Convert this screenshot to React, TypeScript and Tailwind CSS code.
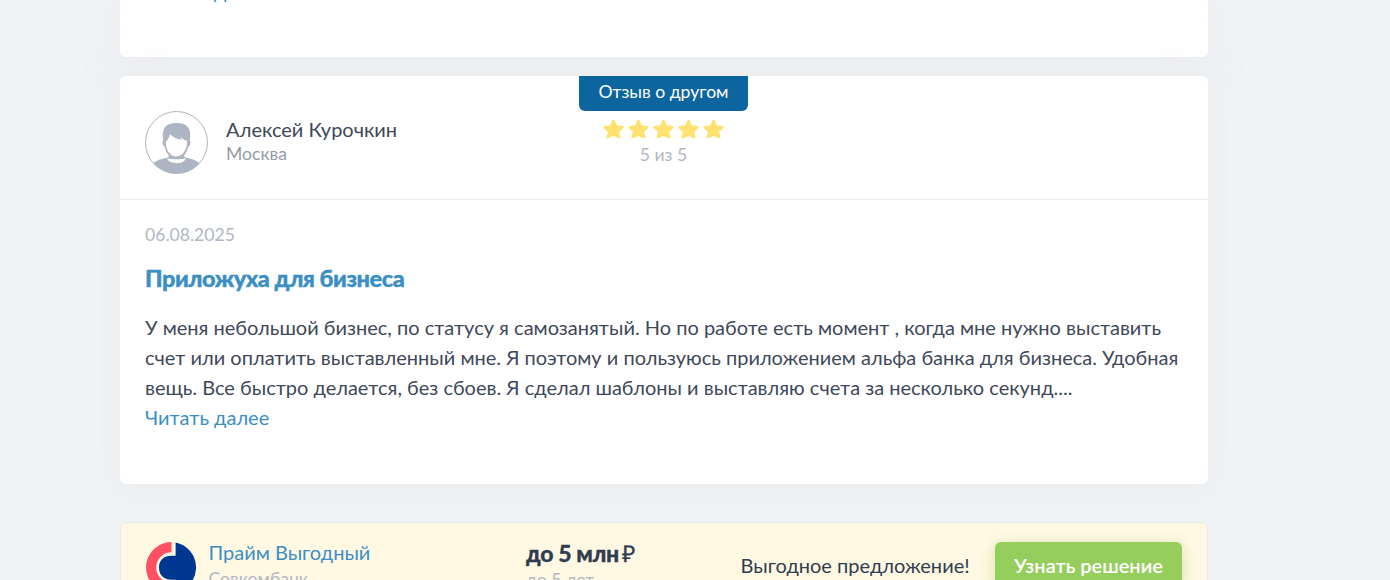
import React from 'react';

interface Review {
  author: string;
  city: string;
  badge: string;
  rating: number;
  date: string;
  title: string;
  text: string;
}

const review: Review = {
  author: 'Алексей Курочкин',
  city: 'Москва',
  badge: 'Отзыв о другом',
  rating: 5,
  date: '06.08.2025',
  title: 'Приложуха для бизнеса',
  text: 'У меня небольшой бизнес, по статусу я самозанятый. Но по работе есть момент , когда мне нужно выставить счет или оплатить выставленный мне. Я поэтому и пользуюсь приложением альфа банка для бизнеса. Удобная вещь. Все быстро делается, без сбоев. Я сделал шаблоны и выставляю счета за несколько секунд....',
};

const Avatar = () => (
  <svg viewBox="0 0 63 63" className="h-[63px] w-[63px] shrink-0">
    <defs>
      <clipPath id="avatar-circle">
        <circle cx="31.5" cy="31.5" r="31" />
      </clipPath>
    </defs>
    <g clipPath="url(#avatar-circle)">
      {/* shoulders, then the head outline with the neck */}
      <path
        d="M7 54C11 48.5 17 48 21 47C23.5 46.3 24.3 45.5 24.3 43H38.7C38.7 45.5 39.5 46.3 42 47C46 48 52 48.5 56 54V63H7Z"
        fill="#adb5c2"
      />
      <path
        d="M18.3 29.5C16.2 18 20 12 31.5 12C43 12 46.8 18 44.7 29.5C46.3 30.5 45 35.5 43.2 36C42 41 39.5 44.5 37.5 46.5L31.5 49L25.5 46.5C23.5 44.5 21 41 19.8 36C18 35.5 16.7 30.5 18.3 29.5Z"
        fill="#adb5c2"
      />
      <path
        d="M20.8 31C22.5 29.5 24.2 26.2 25 23.3C28 26.5 32 28 36.8 28.8L35.2 25.5C37 28 39.5 29 42.2 29.8C42.3 37 38.5 45.5 31.5 45.5C24.5 45.5 20.8 38 20.8 31Z"
        fill="#fff"
      />
      <path d="M22.3 47.2C27 48.6 36 48.6 40.7 47.2C39.5 53.8 23.5 53.8 22.3 47.2Z" fill="#fff" />
    </g>
    <circle cx="31.5" cy="31.5" r="31" fill="none" stroke="#adb5c2" />
  </svg>
);

const Star = () => (
  <svg viewBox="0 0 21 20" className="h-5 w-[21px]">
    <path
      d="M10.5 2L13 7.6L19.3 8.4L14.7 12.5L16.2 18.2L10.5 15.5L4.8 18.2L6.3 12.5L1.7 8.4L8 7.6Z"
      fill="#ffe270"
      stroke="#ffe270"
      strokeWidth="2.6"
      strokeLinejoin="round"
    />
  </svg>
);

const BankLogo = () => (
  <svg viewBox="0 0 50 50" className="h-[51px] w-[51px] shrink-0">
    <path d="M26 0A25 25 0 1 0 26 50V40A15 15 0 0 1 26 10Z" fill="#ff4f62" />
    <path
      d="M30 .5A25 25 0 0 1 30 49.5V37H26C18 37 13.7 32 13.7 25S18 13.5 26 13.5H30Z"
      fill="#003791"
    />
  </svg>
);

const ReadMore = () => (
  <a href="#" className="block text-xl leading-[30px] text-[#3b8fc4]">
    Читать далее
  </a>
);

const ReviewCard = ({ item }: { item: Review }) => (
  <article className="mt-[19px] h-[408px] rounded-md bg-white shadow-[0_2px_36px_rgba(234,232,234,0.7)]">
    {/* Header */}
    <header className="grid h-[124px] grid-cols-[458px_171px_1fr] border-b border-[#e9eaec]">
      <div className="flex pt-[35px] pl-[25px]">
        <Avatar />
        <div className="ml-[18px] pt-1.5">
          <div className="text-xl leading-6 text-[#40485a]">{item.author}</div>
          <div className="mt-px text-[17.6px] leading-6 text-[#949ba6]">{item.city}</div>
        </div>
      </div>
      <div className="flex flex-col items-center">
        <div className="flex h-[35px] w-[169px] items-center justify-center rounded-b-md bg-[#0c659e] pb-[3px] text-[17.6px] text-white">
          {item.badge}
        </div>
        <div className="mt-2 flex gap-1">
          {Array.from({ length: item.rating }, (_, i) => (
            <Star key={i} />
          ))}
        </div>
        <div className="mt-1 text-[17.6px] leading-6 text-[#b1b7c3]">{item.rating} из 5</div>
      </div>
    </header>

    {/* Body */}
    <div className="px-[25px] pt-[23px]">
      <div className="text-[17.6px] leading-6 text-[#b1b7c3]">{item.date}</div>
      <h2 className="mt-4 text-[23.5px] leading-[30px] font-black tracking-[-0.45px] text-[#3b8fc4] [-webkit-text-stroke:0.4px_#3b8fc4]">
        {item.title}
      </h2>
      <p className="mt-[19px] text-xl leading-[30px] text-[#40485a]">{item.text}</p>
      <ReadMore />
    </div>
  </article>
);

const OfferCard = () => (
  <section className="mt-[38px] flex h-[90px] rounded-md border border-[#e6e9ec] bg-[#fff8e3]">
    <div className="flex w-[405px] pt-[19px] pl-6">
      <BankLogo />
      <div className="-mt-1 ml-[12.5px]">
        <a href="#" className="block text-xl leading-[28px] text-[#3b8fc4]">
          Прайм Выгодный
        </a>
        <div className="mt-px text-[17.6px] leading-6 text-[#b1b7c3]">Совкомбанк</div>
      </div>
    </div>
    <div className="w-[214.5px] pt-[15px]">
      <div className="text-[23px] leading-[30px] font-black tracking-[-0.35px] text-[#2f3d50] [-webkit-text-stroke:0.3px_#2f3d50]">
        до 5 млн<span className="ml-[3px] font-normal">₽</span>
      </div>
      <div className="text-[17.6px] leading-6 text-[#b1b7c3]">до 5 лет</div>
    </div>
    <div className="w-[254.5px] pt-[27px] text-xl leading-[30px] text-[#2f3d50]">Выгодное предложение!</div>
    <button className="mt-[19px] h-12 w-[187px] rounded-md bg-[#96ce5d] pb-0.5 text-xl font-semibold text-white shadow-[0_3px_14px_rgba(150,206,93,0.45)]">
      Узнать решение
    </button>
  </section>
);

const App = () => {
  return (
    <div className="h-[580px] overflow-hidden bg-[#f0f3f6] font-['Lato','Open_Sans',sans-serif]">
      <main className="ml-[120px] w-[1088px]">
        <article className="flex h-[57px] items-end rounded-b-md bg-white px-[25px] pb-[51px] shadow-[0_2px_36px_rgba(234,232,234,0.7)]">
          <ReadMore />
        </article>
        <ReviewCard item={review} />
        <OfferCard />
      </main>
    </div>
  );
};

export default App;
